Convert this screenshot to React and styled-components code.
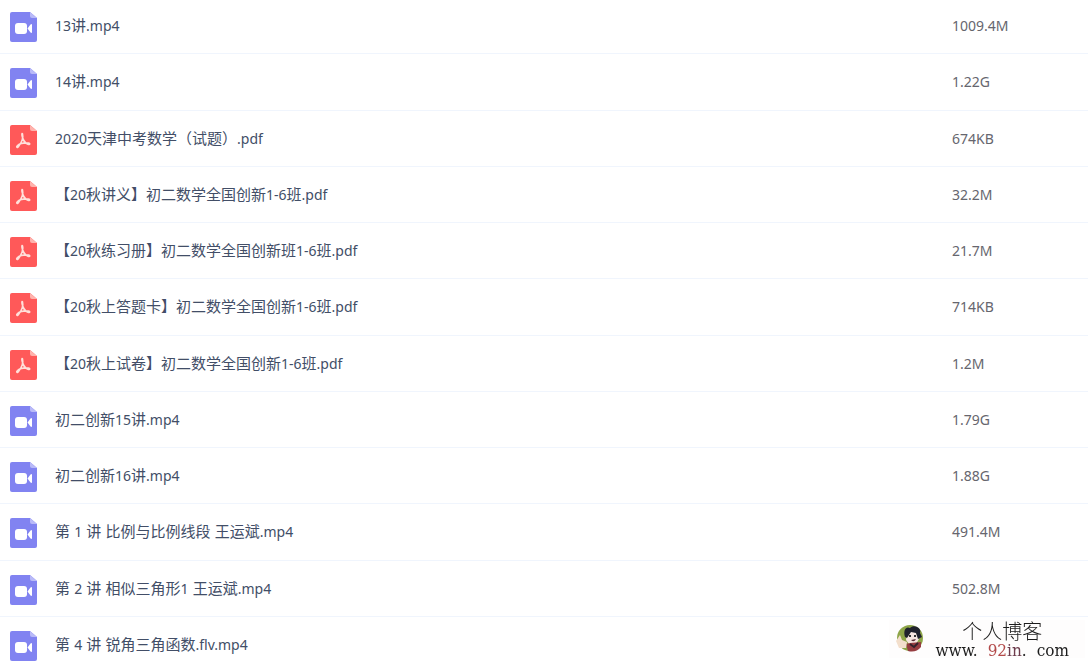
import React from 'react';
import styled, { createGlobalStyle } from 'styled-components';

const GlobalStyle = createGlobalStyle`
  * { box-sizing: border-box; }
  body {
    margin: 0;
    background: #fff;
    font-family: "Liberation Sans", "Noto Sans CJK SC", sans-serif;
    font-size: 15px;
    line-height: 20px;
  }
`;

const Page = styled.main`
  height: 100vh;
  overflow: hidden;
`;

const FileTable = styled.table`
  width: 100%;
  margin-top: -2px;
  border-collapse: separate;
  border-spacing: 0;
  table-layout: fixed;
`;

const SizeColumn = styled.col`
  width: 136px;
`;

const FileRow = styled.tr`
  height: 56px;
  &:nth-child(4n + 2) { height: 57px; }
`;

const Cell = styled.td`
  padding: 0;
  border-bottom: 1px solid #f0f5fd;
  vertical-align: middle;
`;

const NameCell = styled(Cell)`
  color: #424e67;
`;

const SizeCell = styled(Cell)`
  color: #66666e;
`;

const FileName = styled.div`
  display: flex;
  align-items: center;
  gap: 18px;
  padding-left: 10px;
  white-space: nowrap;
`;

const Latin = styled.span`
  font-family: "Noto Sans", sans-serif;
  font-size: 14px;
`;

const Glyph = styled.svg`
  flex: none;
  display: block;
  width: 27px;
  height: 30px;
  margin-top: 2px;
`;

const Watermark = styled.aside`
  position: fixed;
  right: 3px;
  bottom: 3px;
  display: flex;
  align-items: center;
  gap: 12px;
  padding: 0 16px 0 7px;
  background: #fefdfd;
  color: #1c1c1c;
`;

const Avatar = styled.svg`
  display: block;
  width: 28px;
  height: 30px;
`;

const BlogText = styled.div`
  text-align: center;
`;

const BlogName = styled.div`
  font-family: "Noto Sans CJK SC", sans-serif;
  font-size: 20px;
  font-weight: 300;
  line-height: 22px;
`;

const BlogUrl = styled.div`
  display: flex;
  gap: 10px;
  font-family: "DejaVu Serif Condensed", "DejaVu Serif", serif;
  font-stretch: condensed;
  font-size: 17px;
  line-height: 16px;
`;

const Accent = styled.span`
  color: ${(p) => p.$tone};
`;

function VideoIcon() {
  return (
    <Glyph viewBox="0 0 27 30" aria-hidden="true">
      <path d="M2 0H20L27 6V28Q27 30 25 30H2Q0 30 0 28V2Q0 0 2 0Z" fill="#8183f1" />
      <path d="M20 0L27 6H22Q20 6 20 4Z" fill="#b9baf8" />
      <rect x="5" y="11" width="12" height="11" rx="3" fill="#fff" />
      <path d="M17.500 16.500L20.500 12.500Q22 11.500 22 13V20Q22 21.500 20.500 20.500Z" fill="#fff" />
    </Glyph>
  );
}

function PdfIcon() {
  return (
    <Glyph viewBox="0 0 27 30" aria-hidden="true">
      <path d="M2 0H20L27 6V28Q27 30 25 30H2Q0 30 0 28V2Q0 0 2 0Z" fill="#ff5959" />
      <path d="M20 0L27 6H22Q20 6 20 4Z" fill="#ffb3ad" />
      <path
        d="M12.500 9C13.500 13 12 17 8.500 21.500C7 23.500 6 22 7.500 20.500C10 18.500 14 17.500 18.500 18C20.500 18.500 20 20 18 19.300C15 18 12.800 15 12 10.500C11.700 8.500 12.200 8 12.500 9Z"
        fill="none"
        stroke="#ffe0da"
        strokeWidth="1.600"
        strokeLinejoin="round"
      />
    </Glyph>
  );
}

/* Latin letters and digits sit one size below the Chinese characters. */
function MixedText({ children }) {
  return (
    <span>
      {children
        .split(/([!-~]+)/)
        .map((run, i) => (i % 2 ? <Latin key={i}>{run}</Latin> : run))}
    </span>
  );
}

const files = [
  ['video', '13讲.mp4', '1009.4M'],
  ['video', '14讲.mp4', '1.22G'],
  ['pdf', '2020天津中考数学（试题）.pdf', '674KB'],
  ['pdf', '【20秋讲义】初二数学全国创新1-6班.pdf', '32.2M'],
  ['pdf', '【20秋练习册】初二数学全国创新班1-6班.pdf', '21.7M'],
  ['pdf', '【20秋上答题卡】初二数学全国创新1-6班.pdf', '714KB'],
  ['pdf', '【20秋上试卷】初二数学全国创新1-6班.pdf', '1.2M'],
  ['video', '初二创新15讲.mp4', '1.79G'],
  ['video', '初二创新16讲.mp4', '1.88G'],
  ['video', '第 1 讲 比例与比例线段 王运斌.mp4', '491.4M'],
  ['video', '第 2 讲 相似三角形1 王运斌.mp4', '502.8M'],
  ['video', '第 4 讲 锐角三角函数.flv.mp4', ''],
];

export default function App() {
  return (
    <Page>
      <GlobalStyle />
      <FileTable>
        <colgroup>
          <col />
          <SizeColumn />
        </colgroup>
        <tbody>
          {files.map(([kind, name, size]) => (
            <FileRow key={name}>
              <NameCell>
                <FileName>
                  {kind === 'pdf' ? <PdfIcon /> : <VideoIcon />}
                  <MixedText>{name}</MixedText>
                </FileName>
              </NameCell>
              <SizeCell><Latin>{size}</Latin></SizeCell>
            </FileRow>
          ))}
        </tbody>
      </FileTable>
      <Watermark>
        <Avatar viewBox="0 0 28 30" aria-hidden="true">
          <circle cx="14" cy="14" r="13" fill="#8ea548" />
          <path d="M10 16L11 8L19 6L23 15L20 20H13Z" fill="#f6e6e0" />
          <path d="M9 13C7 6 10 2 14 4C18 0 26 4 24 9L26 13L22 15L20 9L15 8L11 14Z" fill="#20212c" />
          <path d="M13 12H15M18 12H20" stroke="#333" strokeWidth="2" />
          <path d="M15 16Q18 19 20 15Z" fill="#5b3038" />
          <path d="M10 20L14 19L25 18L25 23Q20 29 12 27Z" fill="#963d40" />
          <path d="M0 17L4 11L6 16L11 18L10 24L3 24Z" fill="#f3dfcc" />
          <path d="M14 20L18 23L22 19" fill="none" stroke="#33222c" strokeWidth="2" />
        </Avatar>
        <BlogText>
          <BlogName>个人博客</BlogName>
          <BlogUrl>
            <span>www.</span>
            <span>
              <Accent $tone="#b34a4a">92</Accent>
              <Accent $tone="#6d3c4c">in</Accent>.
            </span>
            <span>com</span>
          </BlogUrl>
        </BlogText>
      </Watermark>
    </Page>
  );
}
